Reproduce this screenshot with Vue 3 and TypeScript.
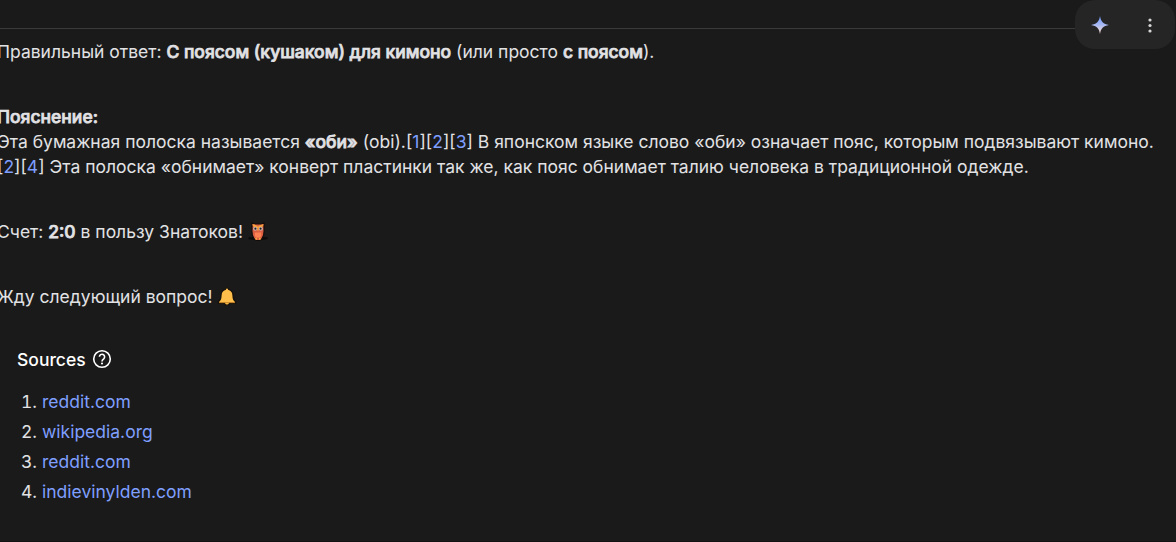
<template>
  <div class="page">
    <header class="top">
      <div class="divider" />
      <div class="actions">
        <button class="action" aria-label="Rerun">
          <svg width="18" height="18" viewBox="0 0 18 18">
            <defs>
              <linearGradient id="spark" x1="0" y1="0" x2="0" y2="1">
                <stop offset="0.1" stop-color="#7ba0ff" />
                <stop offset="0.5" stop-color="#a9b9f2" />
                <stop offset="0.9" stop-color="#f0d8d4" />
              </linearGradient>
            </defs>
            <path d="M9 0C9.9 5.6 12.2 8.1 18 9C12.2 9.9 9.9 12.4 9 18C8.1 12.4 5.8 9.9 0 9C5.8 8.1 8.1 5.6 9 0Z" fill="url(#spark)" />
          </svg>
        </button>
        <button class="action" aria-label="More">
          <svg width="4" height="16" viewBox="0 0 4 16" fill="#d6d6d6">
            <circle cx="2" cy="3" r="1.6" />
            <circle cx="2" cy="8.5" r="1.6" />
            <circle cx="2" cy="14" r="1.6" />
          </svg>
        </button>
      </div>
    </header>

    <main class="answer">
      <p>Правильный ответ: <strong>С поясом (кушаком) для кимоно</strong> (или просто <strong>с поясом</strong>).</p>
      <p>
        <strong>Пояснение:</strong><br />
        Эта бумажная полоска называется <strong>«оби»</strong> (obi).<template v-for="n in [1, 2, 3]" :key="n">[<a>{{ n }}</a>]</template> В японском языке слово «оби» означает пояс, которым подвязывают кимоно.<br />
        <template v-for="n in [2, 4]" :key="n">[<a>{{ n }}</a>]</template> Эта полоска «обнимает» конверт пластинки так же, как пояс обнимает талию человека в традиционной одежде.
      </p>
      <p>
        Счет: <strong>2:0</strong> в пользу Знатоков!
        <svg class="emoji" width="22" height="20" viewBox="0 0 22 20">
          <path d="M0.500 15.300h19v1.700q-9.500 2.200-19 0z" fill="#0b0909" />
          <path d="M4 1L7 2h6l3-1v5.700q.6 6-1.800 9.600L12 18.500H8l-2.200-2.200Q3.400 12.700 4 6.700z" fill="#d95e42" stroke="#120d0b" stroke-width="1.2" />
          <path d="M4.300 2.200Q9 2.800 10 4.800q1-2 5.700-2.600L14.800 4.600 10 6.500 5.200 4.600z" fill="#f5a13d" />
          <circle cx="7.200" cy="6.700" r="1.900" fill="#cfc5c8" />
          <circle cx="12.800" cy="6.700" r="1.900" fill="#cfc5c8" />
          <circle cx="7.400" cy="6.700" r="1.100" fill="#2b1c1c" />
          <circle cx="12.600" cy="6.700" r="1.100" fill="#2b1c1c" />
          <path d="M9.100 6.500h1.800L10 9.400z" fill="#ffc04b" />
          <path d="M6.800 10.500h6.400v3.800q-3.200 3-6.400 0z" fill="#ff8052" />
          <path d="M7.300 15.800h1.700v2H7.300zM11 15.800h1.700v2H11z" fill="#f5a13d" />
        </svg>
      </p>
      <p>
        Жду следующий вопрос!
        <svg class="emoji" width="22" height="20" viewBox="0 0 22 20">
          <path d="M8.300 2.500q.2-1.700 1.700-1.700t1.700 1.700q4.300 1.400 4.300 6 0 4.300 2.500 6v1.800h-6q-.4 1.900-2.500 1.900t-2.500-1.900h-6v-1.800q2.500-1.700 2.500-6 0-4.600 4.300-6z" fill="#ffbf4a" stroke="#15100b" stroke-width="1.200" />
          <path d="M2 15.300h16v.8H2z" fill="#b97824" />
        </svg>
      </p>
    </main>

    <section class="sources">
      <h2>
        Sources
        <svg class="help" width="20" height="20" viewBox="0 0 20 20" fill="none" stroke="#fff" stroke-width="1.6">
          <circle cx="10" cy="10" r="8.300" />
          <path d="M7.400 7.800a2.600 2.600 0 1 1 4.300 2C10.600 10.700 10 11.200 10 12.400" />
          <circle cx="10" cy="14.500" r="1.050" fill="#fff" stroke="none" />
        </svg>
      </h2>
      <ol>
        <li v-for="(source, i) in sources" :key="i">
          <span class="num">{{ i + 1 }}.</span>
          <a>{{ source }}</a>
        </li>
      </ol>
    </section>
  </div>
</template>

<script setup lang="ts">
const sources: string[] = ['reddit.com', 'wikipedia.org', 'reddit.com', 'indievinylden.com']
</script>

<style>
body {
  background: #1a1a1a;
}
</style>

<style scoped>
.page {
  box-sizing: border-box;
  height: 542px;
  overflow: hidden;
  background: #1a1a1a;
  border-bottom: 1px solid #141414;
  color: #e2e2e5;
  font-family: Inter, sans-serif;
  font-size: 17.5px;
  line-height: 25px;
}

.top {
  display: flex;
  height: 39px;
}

.divider {
  flex: 1;
  height: 1px;
  margin-top: 28px;
  background: #3a3a3a;
}

.actions {
  display: flex;
  box-sizing: border-box;
  width: 100px;
  height: 49px;
  margin-right: 1px;
  border-radius: 20px;
  background: #252525;
}

.action {
  display: flex;
  flex: 1;
  align-items: center;
  justify-content: center;
  padding: 0;
  border: 0;
  background: none;
}

.answer {
  margin-left: -3px;
  white-space: nowrap;
}

.answer p {
  margin: 0 0 40px;
}

strong {
  font-weight: 500;
  -webkit-text-stroke: 0.75px currentColor;
}

a {
  color: #7f9fff;
}

.emoji {
  vertical-align: -4px;
}

.sources {
  margin: -2px 0 0 17px;
}

.sources h2 {
  display: flex;
  align-items: center;
  gap: 6px;
  margin: 0 0 15px;
  color: #fff;
  font-size: 17.5px;
  font-weight: 500;
  line-height: 25px;
}

.help {
  margin-bottom: 2px;
}

.sources ol {
  margin: 0;
  padding: 0;
  list-style: none;
}

.sources li {
  display: flex;
  gap: 5px;
  line-height: 30px;
}

.num {
  width: 20px;
  text-align: right;
  font-variant-numeric: tabular-nums;
}
</style>
